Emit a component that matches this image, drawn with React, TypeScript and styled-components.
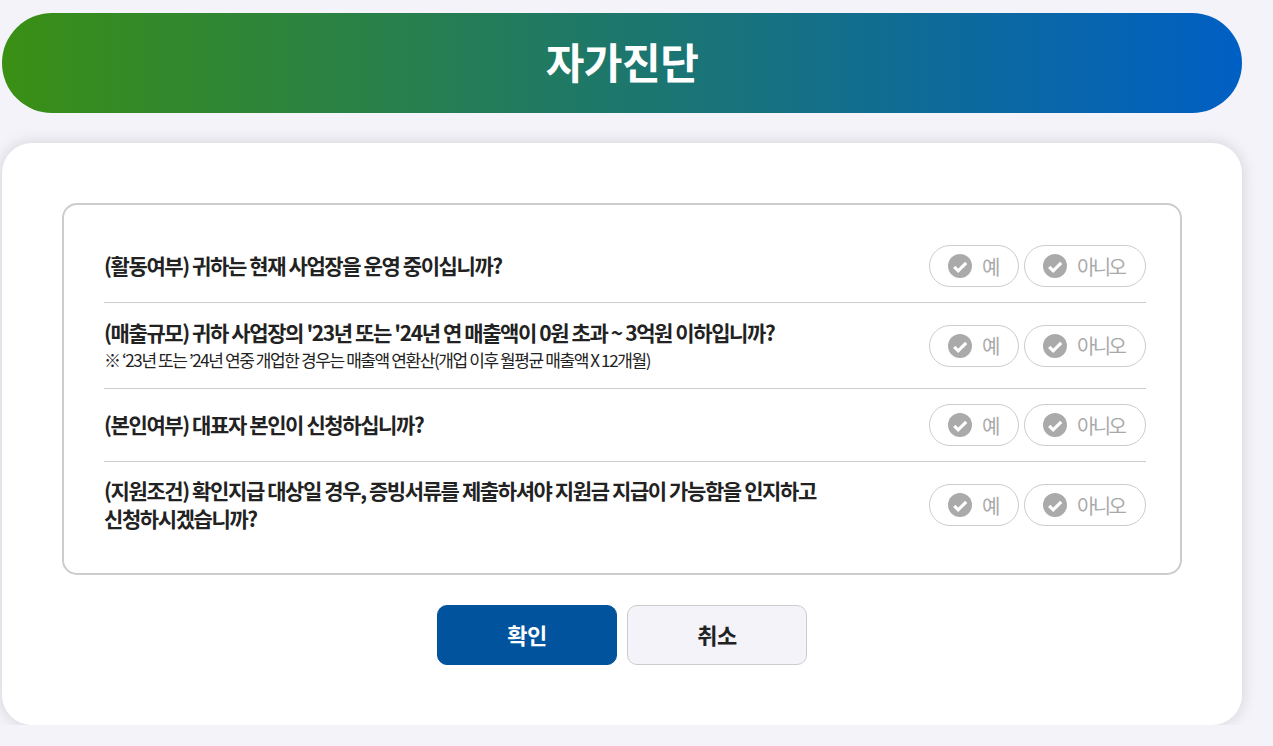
import React from "react";
import styled, { createGlobalStyle } from "styled-components";

const Global = createGlobalStyle`
  html, body { margin: 0; padding: 0; background: #f3f3f9; }
  body { font-family: "Noto Sans CJK KR", "Noto Sans", sans-serif; color: #222; overflow: hidden; }
  * { box-sizing: border-box; }
`;

const Page = styled.div`
  width: 1240px;
  margin-left: 2px;
  padding-top: 13px;
  display: flex;
  flex-direction: column;
  gap: 30px;
`;

const Banner = styled.h1`
  margin: 0;
  height: 100px;
  padding-bottom: 5px;
  border-radius: 50px;
  background: linear-gradient(90deg, #3a8f14 0%, #005fc4 100%);
  color: #fff;
  font-size: 42px;
  font-weight: 700;
  letter-spacing: -0.5px;
  display: flex;
  align-items: center;
  justify-content: center;
`;

const Card = styled.section`
  background: #fff;
  border-radius: 30px;
  padding: 60px;
  box-shadow: 0 0 16px rgba(0, 0, 0, 0.14);
  display: flex;
  flex-direction: column;
  gap: 30px;
`;

const Box = styled.div`
  border: 2px solid #ccc;
  border-radius: 15px;
  padding: 25px 34px 25px 40px;
`;

const Row = styled.div`
  display: flex;
  align-items: center;
  justify-content: space-between;
  padding: 15px 0;
  border-bottom: 1px solid #ccc;
  &:last-child { border-bottom: 0; }
`;

const Question = styled.div`
  width: 730px;
  word-break: keep-all;
`;

const Title = styled.p`
  margin: 0;
  font-size: 21px;
  font-weight: 700;
  line-height: 28px;
  letter-spacing: -1.4px;
  color: #222;
  &:last-child { margin: -1px 0 1px; }
`;

const Note = styled.p`
  margin: 0;
  font-size: 17px;
  line-height: 27px;
  letter-spacing: -1.4px;
  color: #222;
  white-space: nowrap;
`;

const Choices = styled.div`
  display: flex;
  gap: 5px;
`;

const Choice = styled.button<{ $w: number }>`
  width: ${(p) => p.$w}px;
  height: 42px;
  padding: 0 0 0 18px;
  border: 1px solid #ccc;
  border-radius: 21px;
  background: #fff;
  display: flex;
  align-items: center;
  gap: 10px;
  font-family: inherit;
  font-size: 20px;
  letter-spacing: -2.6px;
  color: #aaa;
`;

const Actions = styled.div`
  display: flex;
  justify-content: center;
  gap: 10px;
`;

const Action = styled.button<{ $primary?: boolean }>`
  width: 180px;
  height: 60px;
  padding-bottom: 4px;
  border-radius: 10px;
  border: 1px solid ${(p) => (p.$primary ? "#00539c" : "#ccc")};
  background: ${(p) => (p.$primary ? "#00539c" : "#f3f3f9")};
  color: ${(p) => (p.$primary ? "#fff" : "#222")};
  font-family: inherit;
  font-size: 22px;
  font-weight: 700;
  letter-spacing: -0.5px;
`;

const Check = () => (
  <svg width="24" height="24" viewBox="0 0 24 24" aria-hidden="true">
    <circle cx="12" cy="12" r="12" fill="#aaa" />
    <path d="M6.2 12.8l4 4 8-8" fill="none" stroke="#fff" strokeWidth="3.2" />
  </svg>
);

const YesNo = () => (
  <Choices>
    <Choice $w={90}><Check />예</Choice>
    <Choice $w={122}><Check />아니오</Choice>
  </Choices>
);

export default function App() {
  return (
    <Page>
      <Global />
      <Banner>자가진단</Banner>
      <Card>
        <Box>
          <Row>
            <Question><Title>(활동여부) 귀하는 현재 사업장을 운영 중이십니까?</Title></Question>
            <YesNo />
          </Row>
          <Row>
            <Question>
              <Title>(매출규모) 귀하 사업장의 '23년 또는 '24년 연 매출액이 0원 초과 ~ 3억원 이하입니까?</Title>
              <Note>※ ‘23년 또는 ’24년 연중 개업한 경우는 매출액 연환산(개업 이후 월평균 매출액 X 12개월)</Note>
            </Question>
            <YesNo />
          </Row>
          <Row>
            <Question><Title>(본인여부) 대표자 본인이 신청하십니까?</Title></Question>
            <YesNo />
          </Row>
          <Row>
            <Question>
              <Title>(지원조건) 확인지급 대상일 경우, 증빙서류를 제출하셔야 지원금 지급이 가능함을 인지하고 신청하시겠습니까?</Title>
            </Question>
            <YesNo />
          </Row>
        </Box>
        <Actions>
          <Action $primary>확인</Action>
          <Action>취소</Action>
        </Actions>
      </Card>
    </Page>
  );
}
